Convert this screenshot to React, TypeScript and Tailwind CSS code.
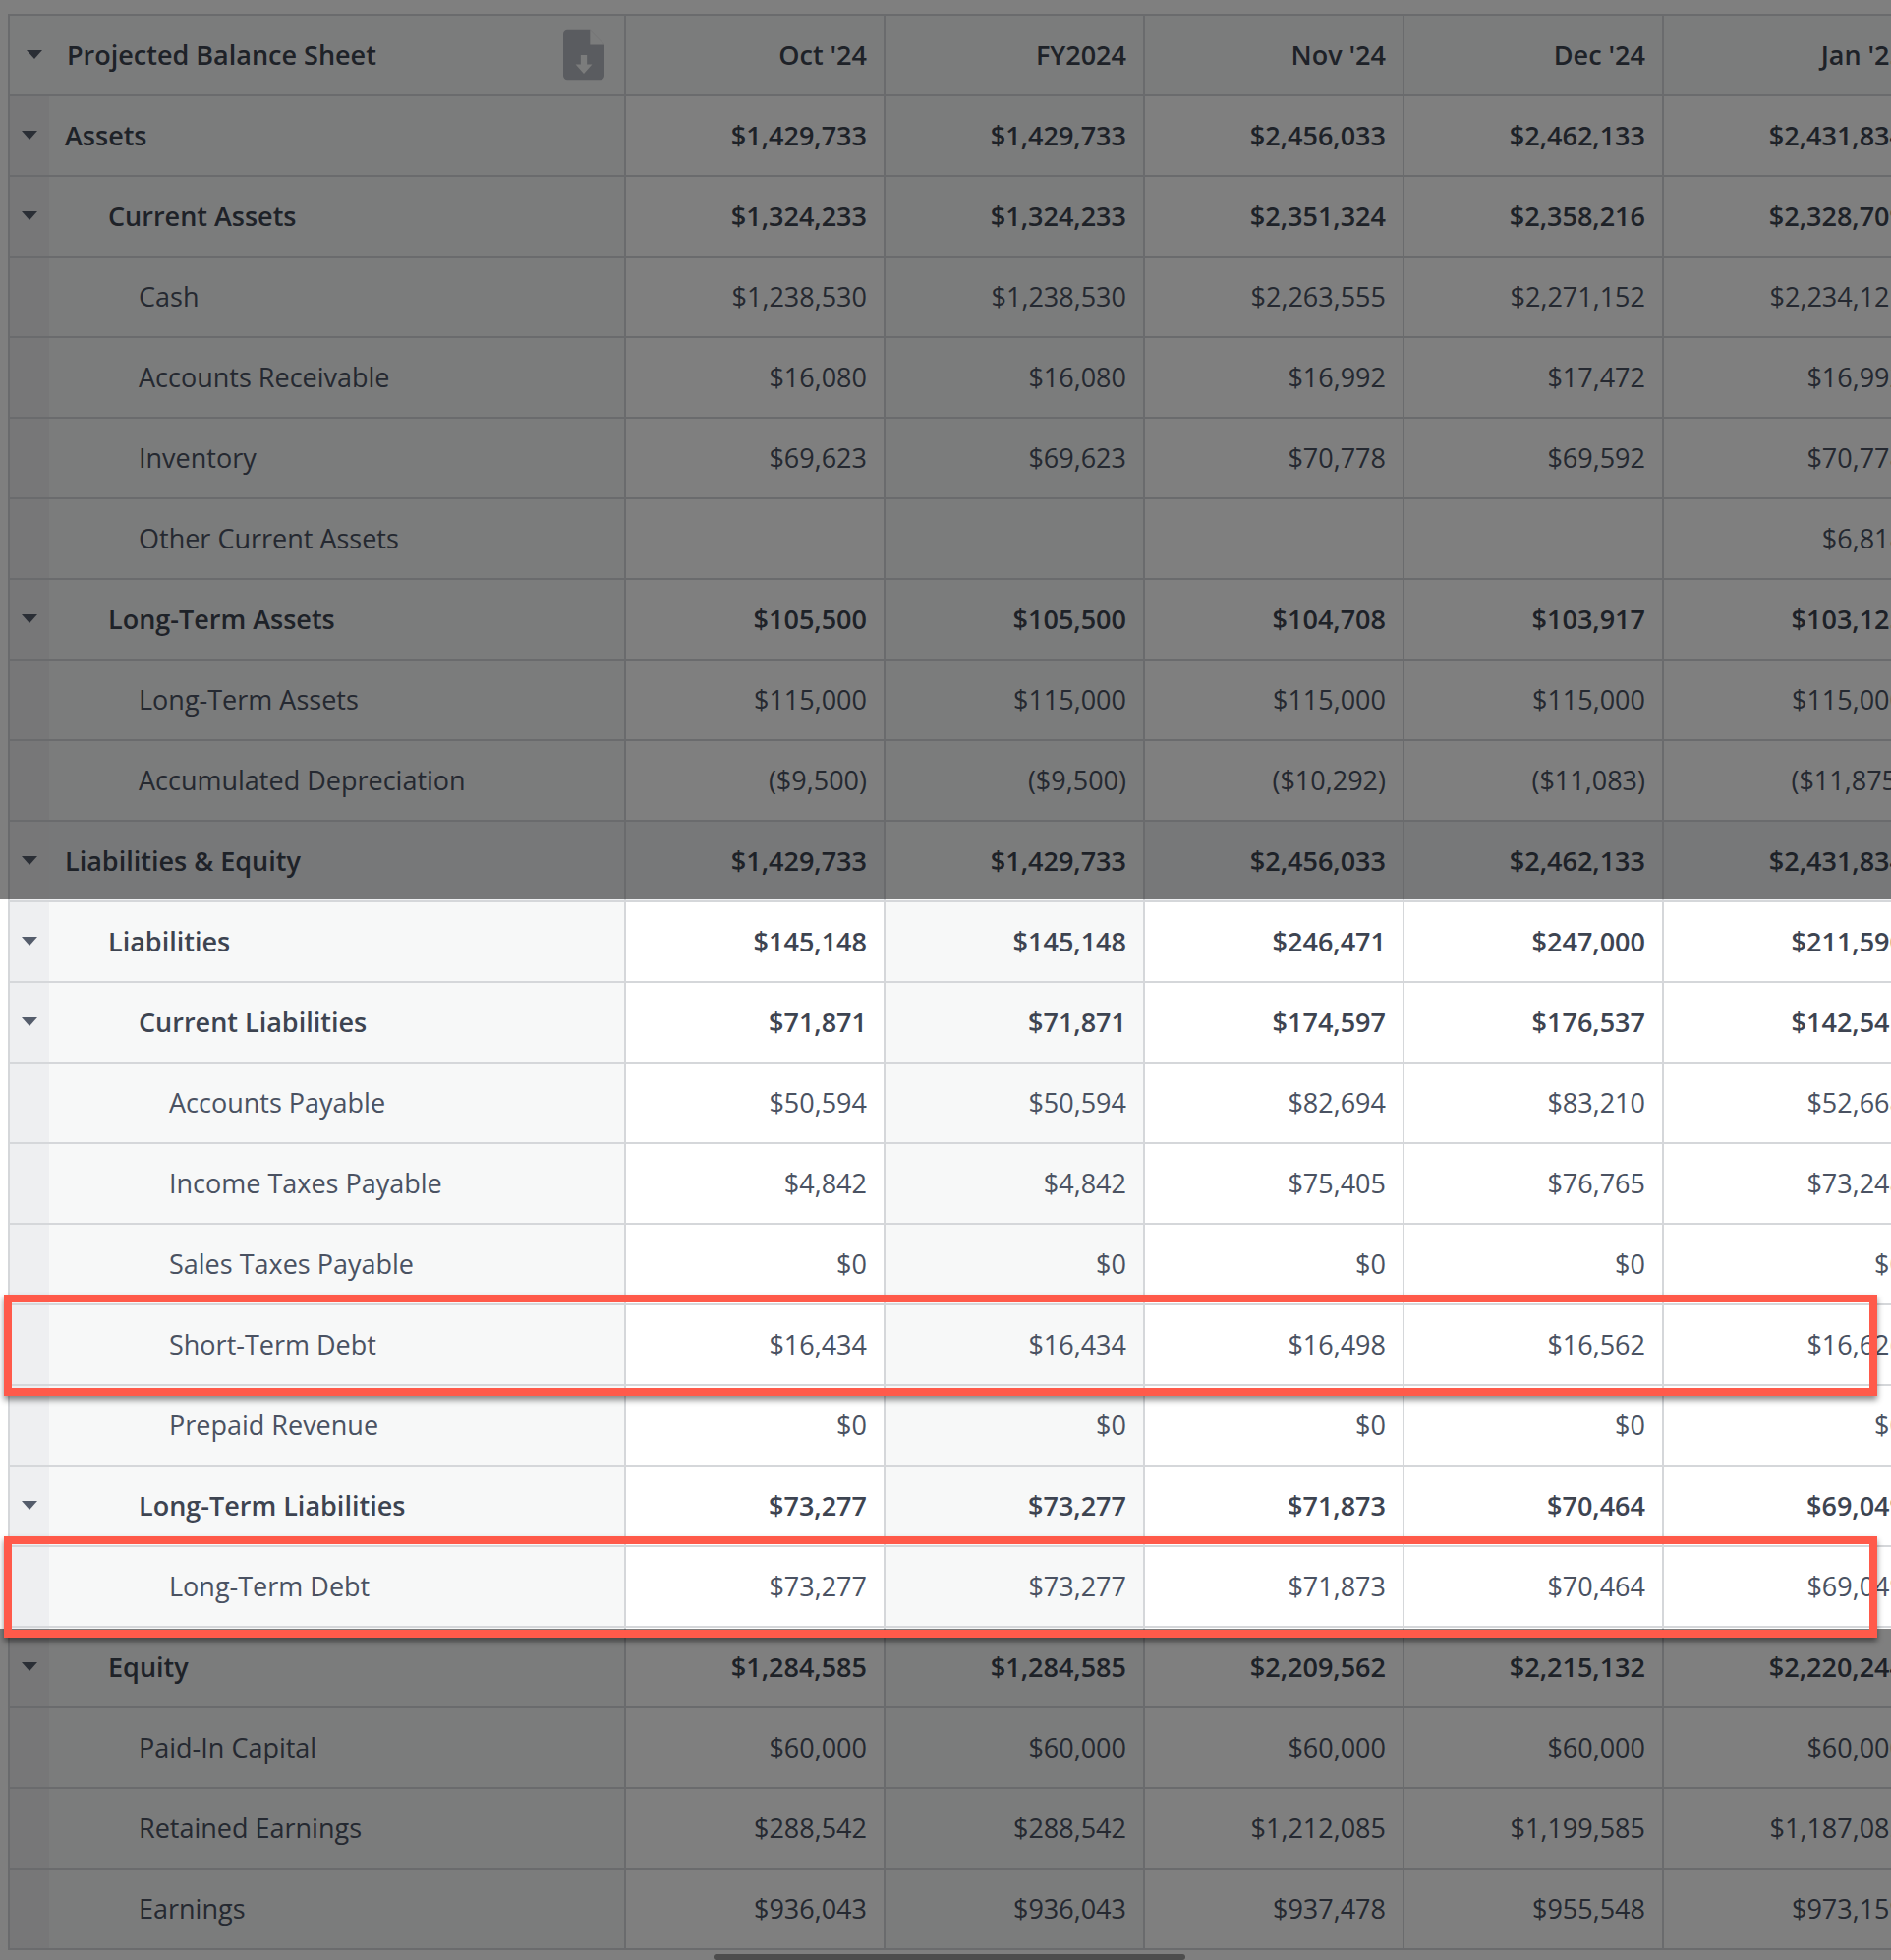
import React from "react";

type Row = { label: string; level: number; bold?: boolean; caret?: boolean; vals: string[]; strong?: boolean };

const rows: Row[] = [
  { label: "Assets", level: 0, bold: true, caret: true, vals: ["$1,429,733", "$1,429,733", "$2,456,033", "$2,462,133", "$2,431,834"] },
  { label: "Current Assets", level: 1, bold: true, caret: true, vals: ["$1,324,233", "$1,324,233", "$2,351,324", "$2,358,216", "$2,328,709"] },
  { label: "Cash", level: 2, vals: ["$1,238,530", "$1,238,530", "$2,263,555", "$2,271,152", "$2,234,121"] },
  { label: "Accounts Receivable", level: 2, vals: ["$16,080", "$16,080", "$16,992", "$17,472", "$16,992"] },
  { label: "Inventory", level: 2, vals: ["$69,623", "$69,623", "$70,778", "$69,592", "$70,778"] },
  { label: "Other Current Assets", level: 2, vals: ["", "", "", "", "$6,818"] },
  { label: "Long-Term Assets", level: 1, bold: true, caret: true, vals: ["$105,500", "$105,500", "$104,708", "$103,917", "$103,125"] },
  { label: "Long-Term Assets", level: 2, vals: ["$115,000", "$115,000", "$115,000", "$115,000", "$115,000"] },
  { label: "Accumulated Depreciation", level: 2, vals: ["($9,500)", "($9,500)", "($10,292)", "($11,083)", "($11,875)"] },
  { label: "Liabilities & Equity", level: 0, bold: true, caret: true, strong: true, vals: ["$1,429,733", "$1,429,733", "$2,456,033", "$2,462,133", "$2,431,834"] },
  { label: "Liabilities", level: 1, bold: true, caret: true, vals: ["$145,148", "$145,148", "$246,471", "$247,000", "$211,590"] },
  { label: "Current Liabilities", level: 2, bold: true, caret: true, vals: ["$71,871", "$71,871", "$174,597", "$176,537", "$142,541"] },
  { label: "Accounts Payable", level: 3, vals: ["$50,594", "$50,594", "$82,694", "$83,210", "$52,668"] },
  { label: "Income Taxes Payable", level: 3, vals: ["$4,842", "$4,842", "$75,405", "$76,765", "$73,248"] },
  { label: "Sales Taxes Payable", level: 3, vals: ["$0", "$0", "$0", "$0", "$0"] },
  { label: "Short-Term Debt", level: 3, vals: ["$16,434", "$16,434", "$16,498", "$16,562", "$16,626"] },
  { label: "Prepaid Revenue", level: 3, vals: ["$0", "$0", "$0", "$0", "$0"] },
  { label: "Long-Term Liabilities", level: 2, bold: true, caret: true, vals: ["$73,277", "$73,277", "$71,873", "$70,464", "$69,049"] },
  { label: "Long-Term Debt", level: 3, vals: ["$73,277", "$73,277", "$71,873", "$70,464", "$69,049"] },
  { label: "Equity", level: 1, bold: true, caret: true, vals: ["$1,284,585", "$1,284,585", "$2,209,562", "$2,215,132", "$2,220,244"] },
  { label: "Paid-In Capital", level: 2, vals: ["$60,000", "$60,000", "$60,000", "$60,000", "$60,000"] },
  { label: "Retained Earnings", level: 2, vals: ["$288,542", "$288,542", "$1,212,085", "$1,199,585", "$1,187,085"] },
  { label: "Earnings", level: 2, vals: ["$936,043", "$936,043", "$937,478", "$955,548", "$973,159"] },
];

const indent = ["pl-[16px]", "pl-[60px]", "pl-[91px]", "pl-[122px]"];

const Caret = () => (
  <svg width="18" height="12" viewBox="0 0 18 12" className="shrink-0">
    <path d="M1 1 L17 1 L9 10 Z" fill="#545c6b" />
  </svg>
);

function RedBox() {
  return (
    <div className="pointer-events-none absolute left-[-6px] right-[198px] top-[-11px] bottom-[-12px] z-30 border-[8px] border-[#ff5a4a] shadow-[0_4px_6px_rgba(0,0,0,0.45)]" />
  );
}

export default function App() {
  return (
    <div
      className="relative w-[1924px] h-[1994px] overflow-hidden bg-white text-[#4a5262]"
      style={{ fontFamily: "'Open Sans', Lato, sans-serif" }}
    >
      <div className="pt-[14px] pl-[8px]">
        <div className="border-l-2 border-t-2 border-[#d5d7da] w-[2100px]">
          <div className="flex h-[82px] border-b-2 border-[#d5d7da] bg-[#f7f8f8]">
            <div className="w-[627px] shrink-0 flex items-center pl-[16px] pr-[20px] border-r-2 border-[#d5d7da]">
              <Caret />
              <span className="ml-[24px] text-[27px] font-semibold text-[#3d4451] flex-1">Projected Balance Sheet</span>
              <svg width="42" height="52" viewBox="0 0 40 48">
                <path d="M4 0 H26 L40 14 V44 a4 4 0 0 1 -4 4 H4 a4 4 0 0 1 -4 -4 V4 a4 4 0 0 1 4 -4 Z" fill="#b5b9c0" />
                <path d="M26 0 V14 H40 Z" fill="#f7f8f8" />
                <path d="M17 24 H23 V33 H28 L20 42 L12 33 H17 Z" fill="#f7f8f8" />
              </svg>
            </div>
            {["Oct '24", "FY2024", "Nov '24", "Dec '24", "Jan '25", ""].map((h, i) => (
              <div key={i} className="w-[264px] shrink-0 flex items-center justify-end pr-[17px] border-r-2 border-[#d5d7da] text-[27px] font-semibold text-[#3d4451]">
                {h}
              </div>
            ))}
          </div>
          {rows.map((r, idx) => (
            <div key={idx} className={`relative flex h-[82px] border-b-2 border-[#d5d7da] ${r.strong ? "bg-[#eef0f2]" : "bg-white"}`}>
              <div className={`w-[627px] shrink-0 flex items-center border-r-2 border-[#d5d7da] ${r.strong ? "bg-[#eef0f2]" : "bg-[#f7f8f8]"}`}>
                <div className="w-[40px] h-full bg-[#eeeff1] flex items-center justify-center self-stretch shrink-0">
                  {r.caret && <Caret />}
                </div>
                <span className={`${indent[r.level]} text-[27px] ${r.bold ? "font-semibold text-[#3d4451]" : "text-[#4a5262]"}`}>{r.label}</span>
              </div>
              {[...r.vals, ""].map((v, i) => (
                <div key={i} className={`w-[264px] shrink-0 flex items-center justify-end pr-[17px] border-r-2 border-[#d5d7da] text-[27px] ${i === 1 ? "bg-[#f7f8f8]" : ""} ${r.bold ? "font-semibold text-[#3d4451]" : "text-[#4a5262]"}`}>
                  {v}
                </div>
              ))}
              {(r.label === "Short-Term Debt" || r.label === "Long-Term Debt") && <RedBox />}
            </div>
          ))}
        </div>
        <div className="ml-[718px] mt-[4px] w-[480px] h-[6px] rounded-full bg-[#9a9a9a]" />
      </div>
      <div className="absolute left-0 right-0 top-0 h-[915px] bg-black/50 z-20" />
      <div className="absolute left-0 right-0 top-[1657px] bottom-0 bg-black/50 z-20" />
    </div>
  );
}
